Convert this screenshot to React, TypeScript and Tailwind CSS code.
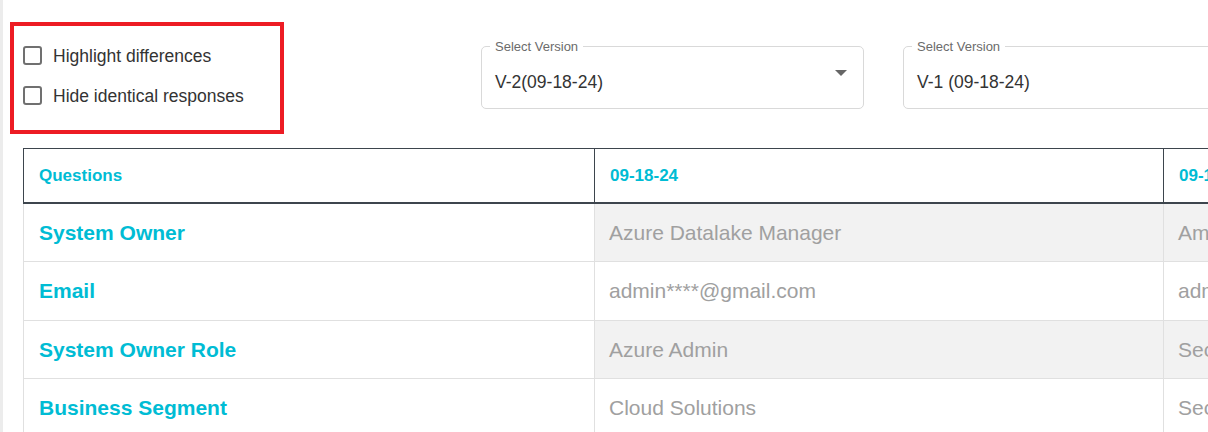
import React from "react";

type Row = { question: string; values: string[] };

const rows: Row[] = [
  { question: "System Owner", values: ["Azure Datalake Manager", "Amazon Datalake Manager"] },
  { question: "Email", values: ["admin****@gmail.com", "admin****@gmail.com"] },
  { question: "System Owner Role", values: ["Azure Admin", "Security Admin"] },
  { question: "Business Segment", values: ["Cloud Solutions", "Security Solutions"] },
];

const columns = ["09-18-24", "09-18-24"];
const rowHeights = ["h-[58px]", "h-[59px]", "h-[58px]", "h-[58px]"];

function Checkbox({ label }: { label: string }) {
  return (
    <label className="flex h-[19px] items-center">
      <span className="h-[19px] w-[19px] shrink-0 rounded-[3px] border-2 border-[#707070] bg-white" />
      <span className="ml-[11px] mt-[2px] whitespace-nowrap text-[17.5px] leading-none text-[#333333]">{label}</span>
    </label>
  );
}

function VersionSelect({ value, arrow }: { value: string; arrow?: boolean }) {
  return (
    <div className="relative flex h-[63px] w-[383px] shrink-0 items-center rounded-[5px] border border-[#d9d9d9] pl-[13px] pr-[15px]">
      <span className="absolute left-[8px] top-[-8px] bg-white px-[5px] text-[13px] leading-[16px] text-[#6b6b6b]">
        Select Version
      </span>
      <span className="mt-[10px] flex-1 whitespace-nowrap text-[17.5px] leading-none text-[#333333]">{value}</span>
      {arrow && (
        <svg width="14" height="8" viewBox="0 0 14 8" className="mt-[-10px]">
          <path d="M1 1 L13 1 L7 7 Z" fill="#666666" />
        </svg>
      )}
    </div>
  );
}

export default function App() {
  return (
    <div className="flex h-[432px] w-[1208px] overflow-hidden bg-white font-['Liberation_Sans',Arial,sans-serif]">
      <div className="w-[3px] shrink-0 bg-[#ececec]" />
      <div className="min-w-0 flex-1 pl-[20px]">
        {/* filters and version pickers */}
        <div className="-ml-[13px] flex items-start pt-[22px]">
          <div className="flex h-[112px] w-[274px] shrink-0 flex-col gap-[21px] border-4 border-[#ed1c24] pl-[9px] pt-[20px]">
            <Checkbox label="Highlight differences" />
            <Checkbox label="Hide identical responses" />
          </div>
          <div className="ml-[197px] mt-[24px] flex gap-[39px]">
            <VersionSelect value="V-2(09-18-24)" arrow />
            <VersionSelect value="V-1 (09-18-24)" arrow />
          </div>
        </div>

        {/* comparison grid */}
        <div className="mt-[14px] w-[1712px]">
          <div className="flex h-[56px] border-b-2 border-l border-t border-[#3d454d]">
            <div className="flex w-[571px] shrink-0 items-center border-r border-[#3d454d] pl-[15px] text-[17px] font-bold text-[#00bcd4]">
              Questions
            </div>
            {columns.map((c, i) => (
              <div
                key={i}
                className="flex w-[569px] shrink-0 items-center border-r border-[#3d454d] pl-[15px] text-[17px] font-bold text-[#00bcd4]"
              >
                {c}
              </div>
            ))}
          </div>
          {rows.map((r, ri) => (
            <div key={ri} className={`flex ${rowHeights[ri]} border-b border-l border-[#e0e0e0]`}>
              <div className="flex w-[571px] shrink-0 items-center border-r border-[#e0e0e0] pl-[15px] text-[21px] font-bold text-[#00bcd4]">
                {r.question}
              </div>
              {r.values.map((v, vi) => (
                <div
                  key={vi}
                  className={
                    ri % 2 === 0
                      ? "flex w-[569px] shrink-0 items-center whitespace-nowrap border-r border-[#e0e0e0] bg-[#f2f2f2] pl-[14px] text-[21px] text-[#a0a0a0]"
                      : "flex w-[569px] shrink-0 items-center whitespace-nowrap border-r border-[#e0e0e0] bg-white pl-[14px] text-[21px] text-[#a0a0a0]"
                  }
                >
                  {v}
                </div>
              ))}
            </div>
          ))}
        </div>
      </div>
    </div>
  );
}
